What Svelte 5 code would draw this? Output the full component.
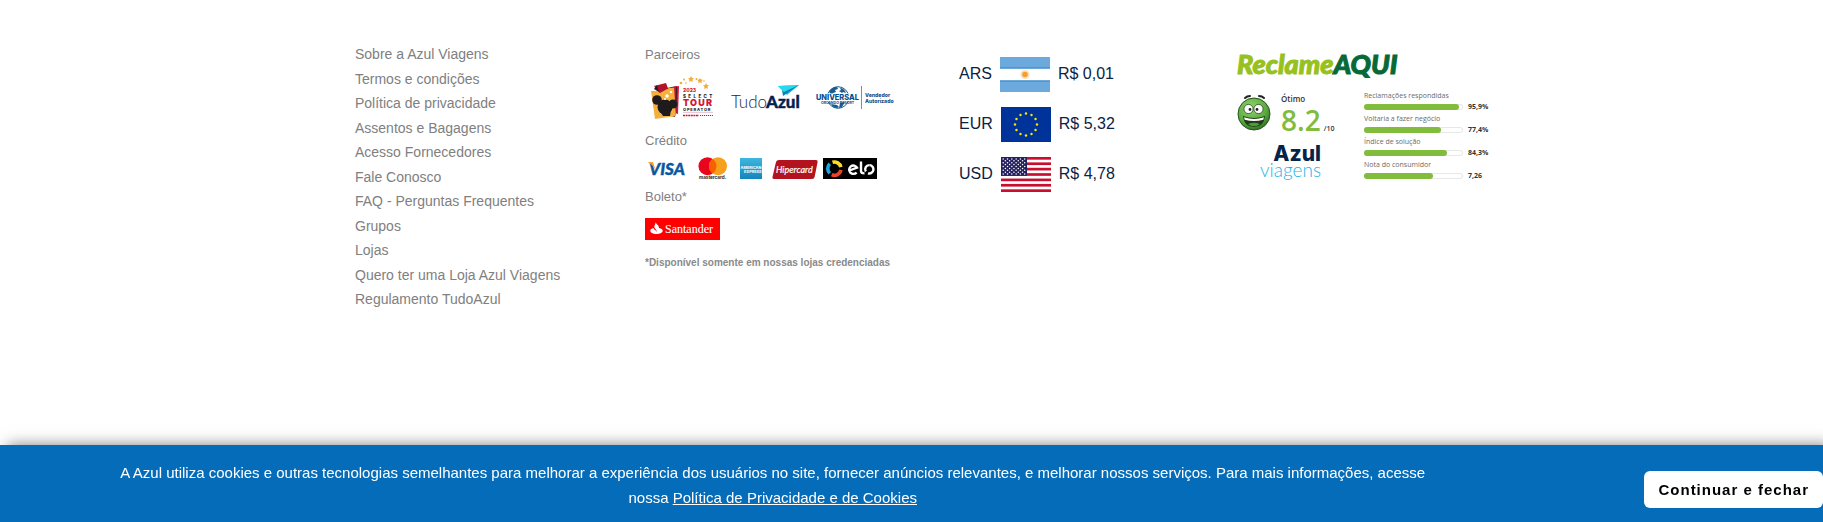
<script>
  const links = [
    'Sobre a Azul Viagens',
    'Termos e condições',
    'Política de privacidade',
    'Assentos e Bagagens',
    'Acesso Fornecedores',
    'Fale Conosco',
    'FAQ - Perguntas Frequentes',
    'Grupos',
    'Lojas',
    'Quero ter uma Loja Azul Viagens',
    'Regulamento TudoAzul'
  ];

  const rates = [
    { code: 'ARS', value: 'R$ 0,01' },
    { code: 'EUR', value: 'R$ 5,32' },
    { code: 'USD', value: 'R$ 4,78' }
  ];

  const scores = [
    { label: 'Reclamações respondidas', value: '95,9%', fill: 95.9 },
    { label: 'Voltaria a fazer negócio', value: '77,4%', fill: 77.4 },
    { label: 'Índice de solução', value: '84,3%', fill: 84.3 },
    { label: 'Nota do consumidor', value: '7,26', fill: 70 }
  ];

  const euStars = Array.from({ length: 12 }, (_, i) => {
    const a = (i * Math.PI) / 6;
    return { x: 25 + 11 * Math.sin(a), y: 17.5 - 11 * Math.cos(a) };
  });

  const usStars = [];
  for (let row = 0; row < 9; row++) {
    const count = row % 2 ? 5 : 6;
    for (let i = 0; i < count; i++) {
      usStars.push({ x: 2.2 + i * 4.3 + (row % 2 ? 2.15 : 0), y: 1.9 + row * 1.9 });
    }
  }
</script>

<footer class="site-footer">
  <div class="columns">
    <nav aria-label="Institucional">
      <ul class="links">
        {#each links as link}
          <li><a href="#top">{link}</a></li>
        {/each}
      </ul>
    </nav>

    <section class="payments">
      <h2>Parceiros</h2>
      <div class="partners">
        <svg width="66" height="44" viewBox="0 0 66 44" role="img" aria-label="2023 Select Tour Operator">
          <path d="M4 10l12-3 3 8-9 4z" fill="#b3122d" />
          <path d="M4 13l3-4 2 7z" fill="#2b1d1f" />
          <path d="M17 12l10-2-2 31-8-2z" fill="#6d1020" />
          <path d="M22 11l7-1-1 28-6-2z" fill="#d2173a" />
          <path d="M26 11l1 0-1 28-1 0z" fill="#2b1d1f" />
          <path d="M1 15l6 0 3 2 9-5 5 0 2 28-21 3z" fill="#f3b13c" />
          <g fill="#1f1a1e">
            <circle cx="15" cy="31" r="7.5" />
            <circle cx="7" cy="24" r="4.8" />
            <circle cx="23" cy="28" r="4.5" />
            <path d="M10 35l11-2-1 7-7 0z" />
          </g>
          <g fill="#fff">
            <circle cx="17" cy="20" r="1.8" />
            <circle cx="21" cy="16" r="1.3" />
            <circle cx="15" cy="23" r="1" />
          </g>
          <g fill="#f3ac3b">
            <circle cx="31" cy="7" r="1.3" />
            <circle cx="34" cy="3.5" r="1" />
            <path d="M41 0l1 2 2 .3-1.500 1.500.4 2.200-1.900-1-1.900 1 .4-2.200L38 2.300l2-.3z" />
            <circle cx="46.500" cy="3" r="1" />
            <path d="M50 2l1 1.500 2 .3-1.400 1.400.3 2-1.900-1-1.800 1 .3-2L47 3.800l2-.3z" />
            <path d="M56 7l1 2 2 .3-1.500 1.500.4 2.200-1.900-1-1.900 1 .4-2.200L53 9.300l2-.3z" />
            <circle cx="36" cy="7" r=".8" />
            <circle cx="54" cy="5" r=".8" />
          </g>
          <text x="33" y="16" font-size="5" font-weight="800" fill="#d2173a" font-family="Inter, sans-serif">2023</text>
          <text x="33" y="21.500" font-size="4.500" font-weight="800" fill="#1f1a1e" font-family="Inter, sans-serif" letter-spacing="2.400">SELECT</text>
          <text x="33" y="29.500" font-size="9" font-weight="900" fill="#d2173a" font-family="Inter, sans-serif" letter-spacing="1.200">TOUR</text>
          <text x="33" y="34.500" font-size="4" font-weight="800" fill="#1f1a1e" font-family="Inter, sans-serif" letter-spacing=".8">OPERATOR</text>
          <path d="M33 36.300h30" stroke="#d88f9d" stroke-width=".6" />
          <path d="M33 39.500h16" stroke="#d2173a" stroke-width="1.600" stroke-dasharray="2 .6" />
          <path d="M50 39.500h13" stroke="#555" stroke-width="1.200" stroke-dasharray="1.200 .8" />
        </svg>
        <svg width="70" height="26" viewBox="0 0 70 26" role="img" aria-label="TudoAzul">
          <path d="M47 1l21-1-12 10-3-3z" fill="#10cbe4" />
          <path d="M47 1l21-1-15 7z" fill="#27d9ee" />
          <path d="M51 5l2 2 15-7-16 11z" fill="#0a7fb8" />
          <text x="0" y="22.500" font-size="17" fill="#16294f" font-weight="300" font-family="Lato, sans-serif">Tudo</text>
          <text x="35" y="22.500" font-size="17" fill="#041e50" stroke="#041e50" stroke-width=".4" font-weight="900" font-family="Lato, sans-serif">Azul</text>
        </svg>
        <svg width="82" height="26" viewBox="0 0 82 26" role="img" aria-label="Universal Orlando Resort, Vendedor Autorizado">
          <circle cx="22" cy="12.500" r="10.800" fill="#fff" stroke="#1d5b8f" stroke-width="1" />
          <path d="M13 7c2-4 5-5 8-5l1 2-3 1 1 2-3 1-1 2zm11-4c3 0 5 2 6 5l-3-1-1 1-3-2 2-1zM15 19l6 1 2 2-2 1c-3 0-5-2-6-4zm9-1l5-1-3 5-3 1z" fill="#1d5b8f" />
          <path d="M0 8.500h44v7.500H0z" fill="#fff" />
          <text x="0" y="15" font-size="7.400" font-weight="800" fill="#084c8c" font-family="Inter, sans-serif">UNIVERSAL</text>
          <text x="5" y="18.500" font-size="3.600" font-weight="700" fill="#084c8c" font-family="Inter, sans-serif">ORLANDO RESORT</text>
          <path d="M45.500 1v23" stroke="#6c93b8" stroke-width="1" />
          <text x="49" y="12" font-size="5.200" font-weight="800" fill="#194f83" font-family="Inter, sans-serif">Vendedor</text>
          <text x="49" y="18" font-size="5.200" font-weight="800" fill="#194f83" font-family="Inter, sans-serif">Autorizado</text>
        </svg>
      </div>

      <h2>Crédito</h2>
      <div class="cards">
        <svg width="41" height="24" viewBox="0 0 41 24" role="img" aria-label="Visa">
          <text x="2" y="17.500" font-size="17" font-weight="900" font-style="italic" fill="#0b57a0" stroke="#0b57a0" stroke-width=".4" font-family="Lato, sans-serif">VISA</text>
          <path d="M0 5h6l2.500 8C6 8.500 4 6.500 0 5z" fill="#f3a52b" />
        </svg>
        <svg width="30" height="24" viewBox="0 0 30 24" role="img" aria-label="Mastercard">
          <circle cx="9.500" cy="9.200" r="9" fill="#e9061d" />
          <circle cx="20" cy="9.200" r="9" fill="#f7a01d" />
          <path d="M14.750 1.900a9 9 0 0 1 0 14.600a9 9 0 0 1 0-14.600z" fill="#fb6000" />
          <text x="1" y="22" font-size="4.600" font-weight="700" fill="#222" font-family="Inter, sans-serif">mastercard.</text>
        </svg>
        <svg width="24" height="24" viewBox="0 0 24 24" role="img" aria-label="American Express">
          <defs>
            <linearGradient id="amex" x1="0" y1="0" x2="0" y2="1">
              <stop offset="0" stop-color="#3db7dd" />
              <stop offset="1" stop-color="#1484bd" />
            </linearGradient>
          </defs>
          <path d="M2 1h22v21H2z" fill="url(#amex)" />
          <text x="2.500" y="12" font-size="3.800" font-weight="800" fill="#e9f7fc" font-family="Inter, sans-serif">AMERICAN</text>
          <text x="6" y="16" font-size="3.800" font-weight="800" fill="#e9f7fc" font-family="Inter, sans-serif">EXPRESS</text>
        </svg>
        <svg width="46" height="24" viewBox="0 0 46 24" role="img" aria-label="Hipercard">
          <path d="M7 3h37q2 0 1.600 2l-3 15q-.4 2-2.600 2H3q-3 0-2.500-2L4 5q.5-2 3-2z" fill="#b3131e" />
          <text x="4" y="15.500" font-size="9" font-style="italic" font-weight="400" fill="#fff" stroke="#fff" stroke-width=".2" font-family="Lato, sans-serif">Hipercard</text>
        </svg>
        <svg width="54" height="24" viewBox="0 0 54 24" role="img" aria-label="Elo">
          <path d="M0 1h54v21H0z" />
          <g fill="none" stroke-width="3.600">
            <path d="M9.500 5.300a6.500 6.500 0 0 1 8.300 4.900" stroke="#ffde22" />
            <path d="M17.900 12.900a6.500 6.500 0 0 1-9.200 4.700" stroke="#ef4123" />
            <path d="M6.800 16.200a6.500 6.500 0 0 1 0-9.500" stroke="#19a7e0" />
          </g>
          <g fill="none" stroke="#fff" stroke-width="2.400">
            <path d="M26.500 13.500l7.500-2.900a4.200 4.200 0 1 0-.4 4.800" />
            <path d="M38 4.500v9.500q0 2.400 3.500 2.400" />
            <path d="M42.800 14.500a4.200 4.200 0 0 1 3.700-6.400" />
            <path d="M46.500 8.100a4.200 4.200 0 1 1-1.500 8.200" />
          </g>
        </svg>
      </div>

      <h2>Boleto*</h2>
      <svg class="boleto" width="76" height="22" viewBox="0 0 76 22" role="img" aria-label="Santander">
        <path d="M0 0h75v22H0z" fill="#f00" />
        <path d="M10.500 4c.3 2 3.500 3 3.500 6 2.300.6 3.700 1.400 3.700 2.700 0 1.900-2.800 3.300-6.200 3.300S5.300 14.600 5.300 12.700c0-1.300 1.300-2.200 3.200-2.700 0 1.800 3.300 2.200 3 4.200 1.200-2-2.700-4-2.200-6 .3-1.500 1.600-2.200 1.200-4.200z" fill="#fff" />
        <text x="20" y="15" font-size="12" fill="#fff" stroke="#fff" stroke-width=".1" font-family="'Liberation Serif', serif">Santander</text>
      </svg>
      <p class="note">*Disponível somente em nossas lojas credenciadas</p>
    </section>

    <section class="rates" aria-label="Câmbio">
      {#each rates as rate}
        <div class="rate">
          <span>{rate.code}</span>
          <svg width="50" height="35" viewBox="0 0 50 35" aria-hidden="true">
            {#if rate.code === 'ARS'}
              <path d="M0 0h50v35H0z" fill="#fff" />
              <path d="M0 0h50v12H0zM0 23h50v12H0z" fill="#6ca9dc" />
              <path d="M0 10.500h50M0 24.500h50" stroke="#4a98d8" />
              <circle cx="25" cy="17.500" r="4.500" fill="#fbe0bd" />
              <circle cx="25" cy="17.500" r="2.800" fill="#f5a02c" />
            {:else if rate.code === 'EUR'}
              <path d="M0 0h50v35H0z" fill="#039" />
              {#each euStars as s}
                <circle cx={s.x} cy={s.y} r="1.200" fill="#ffe600" />
              {/each}
            {:else}
              <path d="M0 0h50v35H0z" fill="#fff" />
              {#each [0, 2, 4, 6, 8, 10, 12] as i}
                <rect y={(i * 35) / 13} width="50" height={35 / 13} fill="#c8102e" />
              {/each}
              <path d="M0 0h26v18.850H0z" fill="#25215f" />
              {#each usStars as s}
                <circle cx={s.x} cy={s.y} r=".75" fill="#fff" />
              {/each}
            {/if}
          </svg>
          <span>{rate.value}</span>
        </div>
      {/each}
    </section>

    <section class="reputation" aria-label="Reclame Aqui">
      <div class="brand"><span>Reclame</span><strong>AQUI</strong></div>
      <div class="panel">
        <div class="summary">
          <div class="grade">
            <svg width="36" height="38" viewBox="0 0 36 38" aria-hidden="true">
              <defs>
                <radialGradient id="face" cx=".4" cy=".3" r=".8">
                  <stop offset="0" stop-color="#8fd46a" />
                  <stop offset=".6" stop-color="#5cab41" />
                  <stop offset="1" stop-color="#27611f" />
                </radialGradient>
              </defs>
              <circle cx="17" cy="20" r="16" fill="url(#face)" stroke="#27521f" />
              <path d="M8 4q2-2 5-2M22 2q3 0 5 2" fill="none" stroke="#222" stroke-width="2" stroke-linecap="round" />
              <circle cx="11.500" cy="15" r="4.600" fill="#fff" stroke="#234b1c" stroke-width=".8" />
              <circle cx="21.500" cy="15" r="4.600" fill="#fff" stroke="#234b1c" stroke-width=".8" />
              <circle cx="13" cy="15.500" r="1.400" fill="#222" />
              <circle cx="20" cy="15.500" r="1.400" fill="#222" />
              <path d="M6 22q11 4 22 0-1 11-11 11T6 22z" fill="#1d3b17" />
              <path d="M7 23.200q10 3.400 20 0l-.7 2.600q-9.300 2.600-18.600 0z" fill="#fff" />
              <path d="M11 30q6-2.400 12 0-2.500 2.200-6 2.200t-6-2.200z" fill="#4f9c36" />
            </svg>
            <div>
              <div class="word">Ótimo</div>
              <div class="number"><strong>8.2</strong><span>/10</span></div>
            </div>
          </div>
          <div class="company"><strong>Azul</strong><span>viagens</span></div>
        </div>
        <dl class="scores">
          {#each scores as score}
            <div>
              <dt>{score.label}</dt>
              <dd><i class="track"><i class="fill" style="width: {score.fill}%"></i></i><b>{score.value}</b></dd>
            </div>
          {/each}
        </dl>
      </div>
    </section>
  </div>
</footer>

<aside class="cookies" aria-label="Cookies">
  <p>
    A Azul utiliza cookies e outras tecnologias semelhantes para melhorar a experiência dos usuários no site, fornecer
    anúncios relevantes, e melhorar nossos serviços. Para mais informações, acesse nossa
    <a href="#privacidade">Política de Privacidade e de Cookies</a>
  </p>
  <button type="button">Continuar e fechar</button>
</aside>

<style>
  :global(body) {
    background: #fff;
    font-family: 'Liberation Sans', Arial, sans-serif;
  }

  .site-footer {
    padding: 42px 24px 100px;
  }

  .columns {
    display: grid;
    grid-template-columns: minmax(0, 290fr) minmax(0, 314fr) minmax(0, 278fr) minmax(0, 231fr);
    max-width: 1113px;
    margin: 0 auto;
  }

  .links {
    list-style: none;
    margin: 0;
    padding: 0;
    font-size: 14px;
    line-height: 1.75;
  }

  .links a {
    color: #808080;
    text-decoration: none;
  }

  .payments {
    padding-top: 1px;
  }

  h2 {
    margin: 0;
    font-size: 13px;
    font-weight: 400;
    line-height: 24px;
    color: #808080;
  }

  svg {
    display: block;
    flex: none;
  }

  .partners {
    display: flex;
    align-items: center;
    gap: 15px;
    height: 62px;
    padding-left: 5px;
  }

  .cards {
    display: flex;
    align-items: center;
    gap: 10px;
    height: 32px;
    padding-left: 2px;
  }

  .cards svg:last-child {
    margin-left: -5px;
  }

  .boleto {
    margin-top: 9px;
  }

  .note {
    margin: 11px 0 0;
    font-size: 10px;
    font-weight: 700;
    line-height: 24px;
    color: #8a8a8a;
  }

  .rates {
    display: flex;
    flex-direction: column;
    gap: 15px;
    padding-top: 15px;
    color: #0b2343;
    font-size: 16px;
  }

  .rate {
    display: flex;
    align-items: center;
    gap: 8px;
  }

  .rate span {
    padding-bottom: 2px;
  }

  .reputation {
    font-family: 'Open Sans', sans-serif;
  }

  .brand {
    margin-top: 4px;
    font-family: Lato, sans-serif;
    font-size: 27px;
    font-style: italic;
    font-weight: 900;
    line-height: 36px;
    color: #97c11f;
    -webkit-text-stroke: 1px currentColor;
  }

  .brand strong {
    font-weight: 900;
    color: #066938;
  }

  .panel {
    display: flex;
    gap: 39px;
    padding-top: 7px;
  }

  .summary {
    width: 88px;
    flex: none;
  }

  .grade {
    display: flex;
    align-items: flex-start;
    gap: 8px;
    padding-top: 5px;
  }

  .word {
    font-size: 8px;
    font-weight: 600;
    line-height: 10px;
    color: #333;
  }

  .number {
    display: flex;
    align-items: baseline;
    gap: 3px;
    line-height: 32px;
    color: #333;
  }

  .number strong {
    font-size: 28px;
    font-weight: 600;
    color: #82bc3c;
  }

  .number span {
    font-size: 7px;
    font-weight: 600;
  }

  .company {
    display: flex;
    flex-direction: column;
    align-items: flex-end;
    padding-right: 4px;
  }

  .company strong {
    font-family: Inter, sans-serif;
    font-size: 21px;
    font-weight: 800;
    line-height: 18px;
    color: #06234a;
  }

  .company span {
    font-family: Lato, sans-serif;
    font-size: 19px;
    font-weight: 300;
    line-height: 14px;
    color: #1fb4ea;
  }

  .scores {
    margin: 0;
  }

  .scores dt {
    font-size: 7px;
    line-height: 13px;
    color: #6b6b6b;
    white-space: nowrap;
  }

  .scores dd {
    display: flex;
    align-items: center;
    gap: 5px;
    margin: 0;
    line-height: 10px;
  }

  .scores b {
    font-size: 7px;
    color: #333;
  }

  .track {
    box-sizing: border-box;
    width: 99px;
    height: 6px;
    border-radius: 3px;
    background: #fff;
    box-shadow: inset 0 0 0 1px #e8e8e8;
  }

  .fill {
    display: block;
    height: 6px;
    border-radius: 3px;
    background: #82bc3c;
  }

  .cookies {
    position: fixed;
    right: 0;
    bottom: 0;
    left: 0;
    display: flex;
    align-items: center;
    justify-content: space-between;
    background: #046cb8;
    box-shadow: 8px 0 14px rgba(0, 0, 0, 0.5);
    color: #fff;
  }

  .cookies p {
    flex: 1;
    margin: 0;
    padding: 15px 209px 12px 110px;
    text-align: center;
    font-size: 15px;
    line-height: 25px;
  }

  .cookies a {
    color: #fff;
  }

  .cookies button {
    flex: none;
    margin-top: 12px;
    height: 37px;
    padding: 0 14px;
    border: 0;
    border-radius: 6px;
    background: #fff;
    color: #000;
    font-family: inherit;
    font-size: 15px;
    font-weight: 700;
    letter-spacing: 1px;
  }
</style>
